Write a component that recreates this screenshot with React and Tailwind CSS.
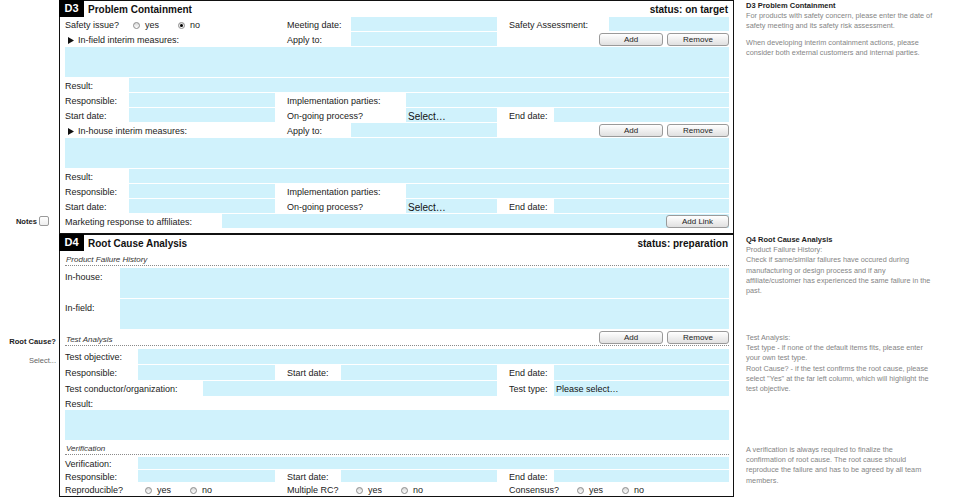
import React from "react";

const FB = "bg-[#d0f2fc]";

function Field({ className = "", children }) {
  return <div className={`${FB} h-full ${className}`}>{children}</div>;
}

function Radio({ label, checked = false, className = "" }) {
  return (
    <div className={`flex items-center shrink-0 ${className}`}>
      <span className="mt-[2px] w-[7px] h-[7px] rounded-full border border-[#8c8c8c] bg-linear-to-b from-[#d8d8d8] to-white flex items-center justify-center">
        {checked && <span className="w-[3px] h-[3px] rounded-full bg-black" />}
      </span>
      <span className="ml-[5px] pt-[3px]">{label}</span>
    </div>
  );
}

function Btn({ children, className = "" }) {
  return (
    <div
      className={`h-[13px] shrink-0 rounded-[3px] border border-[#9a9a9a] bg-linear-to-b from-white to-[#e0e0e0] text-[8px] leading-[11px] text-center text-[#222] ${className}`}
    >
      {children}
    </div>
  );
}

function Tri() {
  return (
    <svg width="6" height="7" viewBox="0 0 6 7" className="shrink-0 mt-[2px]">
      <polygon points="0,0 6,3.5 0,7" fill="#111" />
    </svg>
  );
}

function Row({ children, className = "h-[14px]" }) {
  return <div className={`flex items-center ${className}`}>{children}</div>;
}

function L({ children, className = "" }) {
  return <span className={`shrink-0 whitespace-nowrap pt-[3px] ${className}`}>{children}</span>;
}

function Header({ badge, title, status }) {
  return (
    <div className="h-[16px] flex items-center shrink-0">
      <div className="self-start -ml-px -mt-px h-[17px] w-[25px] bg-black text-white font-bold text-[11px] flex items-center justify-center">
        {badge}
      </div>
      <div className="ml-[4px] pt-[1px] font-bold text-[10px] text-[#111]">{title}</div>
      <div className="ml-auto mr-[5px] pt-[1px] font-bold text-[10px] text-[#111]">{status}</div>
    </div>
  );
}

function Measures({ title }) {
  return (
    <Row>
      <div className="w-[222px] shrink-0 flex items-center pl-[3px]">
        <Tri />
        <span className="ml-[4px] pt-[3px]">{title}</span>
      </div>
      <L className="w-[64px]">Apply to:</L>
      <Field className="w-[146px]" />
      <div className="flex-1" />
      <Btn className="w-[64px]">Add</Btn>
      <Btn className="w-[62px] ml-[4px]">Remove</Btn>
    </Row>
  );
}

function Actions() {
  return (
    <>
      <div className={`${FB} h-[30px]`} />
      <Row>
        <L className="w-[64px]">Result:</L>
        <Field className="flex-1" />
      </Row>
      <Row>
        <L className="w-[64px]">Responsible:</L>
        <Field className="w-[146px]" />
        <div className="w-[12px] shrink-0" />
        <L className="w-[119px]">Implementation parties:</L>
        <Field className="flex-1" />
      </Row>
      <Row>
        <L className="w-[64px]">Start date:</L>
        <Field className="w-[146px]" />
        <div className="w-[12px] shrink-0" />
        <L className="w-[119px]">On-going process?</L>
        <Field className="w-[91px] flex items-center pl-[2px] pt-[2px] text-[10px] text-[#111]">Select…</Field>
        <div className="w-[12px] shrink-0" />
        <L className="w-[45px]">End date:</L>
        <Field className="flex-1" />
      </Row>
    </>
  );
}

function SubHead({ children, className = "h-[15px]" }) {
  return (
    <div className={`flex items-end border-b border-dotted border-[#8a8a8a] ${className}`}>
      <span className="italic text-[8px] leading-[10px] text-[#333] pl-[1px]">{children}</span>
    </div>
  );
}

export default function App() {
  return (
    <div className="w-[960px] h-[500px] bg-white flex overflow-hidden font-['Liberation_Sans',Arial,sans-serif] text-[#222]">
      {/* left gutter */}
      <div className="w-[59px] shrink-0 flex flex-col">
        <div className="h-[214px] shrink-0" />
        <div className="h-[14px] flex items-center justify-end pr-[10px] gap-[2px] text-[7.6px] font-bold text-[#222]">
          <span className="pt-[2px]">Notes</span>
          <span className="w-[10px] h-[10px] rounded-[2px] border border-[#9a9a9a] bg-linear-to-b from-white to-[#eee]" />
        </div>
        <div className="h-[108px] shrink-0" />
        <div className="h-[12px] leading-[12px] text-right pr-[3px] text-[7.6px] font-bold text-[#222] whitespace-nowrap">
          Root Cause?
        </div>
        <div className="h-[7px] shrink-0" />
        <div className="h-[12px] leading-[12px] text-right pr-[3px] text-[7.5px] text-[#666]">Select...</div>
      </div>

      {/* main */}
      <div className="w-[675px] shrink-0 flex flex-col">
        {/* D3 */}
        <div className="border border-[#111] flex flex-col pb-[5px]">
          <Header badge="D3" title="Problem Containment" status="status: on target" />
          <div className="pl-[5px] pr-[4px] flex flex-col gap-[1px] text-[9px]">
            <Row>
              <L className="w-[68px]">Safety issue?</L>
              <Radio label="yes" className="w-[45px]" />
              <Radio label="no" checked className="w-[109px]" />
              <L className="w-[64px]">Meeting date:</L>
              <Field className="w-[146px]" />
              <div className="w-[12px] shrink-0" />
              <L className="w-[100px]">Safety Assessment:</L>
              <Field className="flex-1" />
            </Row>
            <Measures title="In-field interim measures:" />
            <Actions />
            <Measures title="In-house interim measures:" />
            <Actions />
            <Row>
              <L className="w-[157px]">Marketing response to affiliates:</L>
              <Field className="flex-1 flex items-center justify-end">
                <Btn className="w-[63px] h-[12px] leading-[10px]">Add Link</Btn>
              </Field>
            </Row>
          </div>
        </div>

        {/* D4 */}
        <div className="border border-[#111] flex flex-col pb-[1px]">
          <Header badge="D4" title="Root Cause Analysis" status="status: preparation" />
          <div className="pl-[5px] pr-[4px] flex flex-col text-[9px]">
            <SubHead>Product Failure History</SubHead>
            <div className="mt-[2px] h-[30px] flex">
              <span className="w-[55px] shrink-0 pt-[4px] leading-[11px]">In-house:</span>
              <Field className="flex-1" />
            </div>
            <div className="mt-[1px] h-[30px] flex">
              <span className="w-[55px] shrink-0 pt-[4px] leading-[11px]">In-field:</span>
              <Field className="flex-1" />
            </div>
            <div className="h-[17px] flex items-end border-b border-dotted border-[#8a8a8a]">
              <span className="italic text-[8px] leading-[10px] text-[#333] pl-[1px]">Test Analysis</span>
              <div className="ml-auto flex mb-[1px]">
                <Btn className="w-[64px]">Add</Btn>
                <Btn className="w-[62px] ml-[4px]">Remove</Btn>
              </div>
            </div>
            <div className="mt-[3px] flex flex-col gap-[1px]">
              <Row className="h-[15px]">
                <L className="w-[73px]">Test objective:</L>
                <Field className="flex-1" />
              </Row>
              <Row className="h-[15px]">
                <L className="w-[73px]">Responsible:</L>
                <Field className="w-[137px]" />
                <div className="w-[12px] shrink-0" />
                <L className="w-[54px]">Start date:</L>
                <Field className="w-[156px]" />
                <div className="w-[12px] shrink-0" />
                <L className="w-[45px]">End date:</L>
                <Field className="flex-1" />
              </Row>
              <Row className="h-[15px]">
                <L className="w-[138px]">Test conductor/organization:</L>
                <Field className="w-[294px]" />
                <div className="w-[12px] shrink-0" />
                <L className="w-[45px]">Test type:</L>
                <Field className="flex-1 flex items-center pl-[2px] pt-[2px] text-[9px] text-[#111]">Please select…</Field>
              </Row>
              <Row className="h-[13px]">
                <L>Result:</L>
              </Row>
            </div>
            <div className={`${FB} h-[30px]`} />
            <SubHead>Verification</SubHead>
            <div className="mt-[2px] flex flex-col gap-[1px]">
              <Row className="h-[12px]">
                <L className="w-[73px]">Verification:</L>
                <Field className="flex-1" />
              </Row>
              <Row className="h-[12px]">
                <L className="w-[73px]">Responsible:</L>
                <Field className="w-[137px]" />
                <div className="w-[12px] shrink-0" />
                <L className="w-[54px]">Start date:</L>
                <Field className="w-[156px]" />
                <div className="w-[12px] shrink-0" />
                <L className="w-[45px]">End date:</L>
                <Field className="flex-1" />
              </Row>
              <Row className="h-[12px]">
                <L className="w-[80px]">Reproducible?</L>
                <Radio label="yes" className="w-[45px]" />
                <Radio label="no" className="w-[97px]" />
                <L className="w-[69px]">Multiple RC?</L>
                <Radio label="yes" className="w-[45px]" />
                <Radio label="no" className="w-[108px]" />
                <L className="w-[68px]">Consensus?</L>
                <Radio label="yes" className="w-[45px]" />
                <Radio label="no" />
              </Row>
            </div>
          </div>
        </div>
      </div>

      {/* sidebar */}
      <div className="ml-[12px] w-[214px] shrink-0 flex flex-col text-[7.3px] leading-[10.2px] text-[#858585] whitespace-nowrap">
        <div className="h-[235px] shrink-0 pt-[1px]">
          <div className="font-bold text-[7.5px] text-[#222]">D3 Problem Containment</div>
          <div>For products with safety concern, please enter the date of</div>
          <div>safety meeting and its safety risk assessment.</div>
          <div className="mt-[6px]">When developing interim containment actions, please</div>
          <div>consider both external customers and internal parties.</div>
        </div>
        <div className="h-[98px] shrink-0">
          <div className="font-bold text-[7.5px] text-[#222]">Q4 Root Cause Analysis</div>
          <div>Product Failure History:</div>
          <div>Check if same/similar failures have occured during</div>
          <div>manufacturing or design process and if any</div>
          <div>affiliate/customer has experienced the same failure in the</div>
          <div>past.</div>
        </div>
        <div className="h-[112px] shrink-0">
          <div>Test Analysis:</div>
          <div>Test type - if none of the default items fits, please enter</div>
          <div>your own test type.</div>
          <div>Root Cause? - if the test confirms the root cause, please</div>
          <div>select "Yes" at the far left column, which will highlight the</div>
          <div>test objective.</div>
        </div>
        <div className="shrink-0">
          <div>A verification is always required to finalize the</div>
          <div>confirmation of root cause. The root cause should</div>
          <div>reproduce the failure and has to be agreed by all team</div>
          <div>members.</div>
        </div>
      </div>
    </div>
  );
}
